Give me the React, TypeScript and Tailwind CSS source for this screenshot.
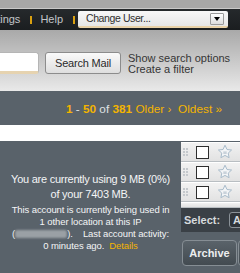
import React from 'react'

function Star() {
  return (
    <svg width="16" height="16" viewBox="0 0 16 16" className="block">
      <path
        d="M8 1.2l2 4.3 4.6.5-3.4 3.1.9 4.6L8 11.4l-4.1 2.3.9-4.6L1.4 6l4.6-.5z"
        fill="#f3f5f7"
        stroke="#a9bccb"
        strokeWidth="1"
        strokeLinejoin="round"
      />
      <rect x="6.3" y="7.4" width="3.4" height="2.6" fill="#c9d2da" />
    </svg>
  )
}

function Grip() {
  return (
    <div className="grid grid-cols-2 gap-[1px] w-[5px]">
      {[0, 1, 2, 3, 4, 5].map((i) => (
        <span key={i} className="block w-[2px] h-[2px] bg-[#c4c8cc]" />
      ))}
    </div>
  )
}

function MailRow({ cut }: { cut?: boolean }) {
  return (
    <div
      className={`flex items-center border-t border-t-white border-b border-b-[#b9bec2] bg-gradient-to-b from-[#f2f2f2] to-[#e2e2e2] pl-[2px] ${
        cut ? 'h-[6px] items-start pt-[4px] overflow-hidden' : 'h-[20px]'
      }`}
    >
      <Grip />
      <span className="ml-[8px] block w-[13px] h-[13px] border border-[#2e2e2e] bg-white shrink-0" />
      <span className="ml-[8px] shrink-0">
        <Star />
      </span>
    </div>
  )
}

export default function App() {
  return (
    <div className="w-[240px] h-[273px] overflow-hidden flex flex-col font-['Liberation_Sans',Arial,sans-serif]">
      {/* top strip */}
      <div className="h-[9px] bg-[#a7a7a7] border-b border-b-[#c9c9c9]" />

      {/* account bar */}
      <div className="h-[21px] bg-gradient-to-b from-[#25292c] to-[#1b1e20] flex items-center justify-end pr-[12px] overflow-hidden whitespace-nowrap">
        <span className="text-[11px] text-[#c3c6c9] shrink-0">Settings</span>
        <span className="ml-[10px] mr-[8px] w-[2px] h-[8px] bg-[#d9a010] shrink-0" />
        <span className="text-[11px] text-[#c3c6c9] shrink-0">Help</span>
        <span className="ml-[10px] mr-[3px] w-[2px] h-[8px] bg-[#d9a010] shrink-0" />
        <div className="w-[150px] h-[17px] shrink-0 rounded-[2px] bg-gradient-to-b from-[#f8f8f8] to-[#e6e6e6] border-b-[2px] border-b-[#e9d2a8] flex items-center justify-between pl-[8px] pr-[4px]">
          <span className="text-[10.5px] tracking-[-0.4px] text-[#2f2f2f] leading-none">Change User...</span>
          <span className="w-[14px] h-[12px] border border-[#9a9a9a] rounded-[1px] bg-gradient-to-b from-white to-[#dcdcdc] flex items-center justify-center">
            <span className="w-0 h-0 border-l-[3.5px] border-r-[3.5px] border-t-[4px] border-l-transparent border-r-transparent border-t-black" />
          </span>
        </div>
      </div>

      {/* search area */}
      <div className="h-[61px] bg-gradient-to-b from-[#a9a9a9] to-[#e9e9e9] pt-[22px] flex items-start">
        <div className="w-[43px] h-[22px] -ml-[4px] bg-white border border-[#b5b5b5] rounded-[3px] border-b-[3px] border-b-[#e6d3b0] shrink-0" />
        <div className="ml-[6px] w-[76px] h-[22px] rounded-[3px] border border-[#8c8c8c] bg-gradient-to-b from-[#fafafa] to-[#dedede] flex items-center justify-center shrink-0">
          <span className="text-[11px] tracking-[-0.2px] text-[#2a2a2a]">Search Mail</span>
        </div>
        <div className="ml-[7px] flex flex-col text-[11px] leading-[11px] text-[#353535] whitespace-nowrap pt-[1px]">
          <span>Show search options</span>
          <span>Create a filter</span>
        </div>
      </div>

      {/* pager */}
      <div className="h-[34px] bg-[#59626a] flex justify-end pr-[18px] pt-[12px] whitespace-nowrap">
        <span className="text-[11.8px] leading-[13px] text-[#f4b400]">
          <b>1</b> <span className="text-[#dfe2e4]">-</span> <b>50</b>{' '}
          <span className="text-[#dfe2e4]">of</span> <b>381</b> Older ›{'\u00a0 '}Oldest »
        </span>
      </div>

      <div className="h-[16px] bg-white" />

      {/* main */}
      <div className="flex-1 bg-[#59626a] flex">
        <div className="flex-1 pt-[31px] text-center text-[#f4f5f6]">
          <p className="text-[11px] tracking-[-0.25px] leading-[15px]">
            You are currently using 9 MB (0%)
            <br />
            of your 7403 MB.
          </p>
          <p className="mt-[2px] text-[9.5px] tracking-[-0.1px] leading-[12px]">
            This account is currently being used in
            <br />1 other location at this IP
            <br />(
            <span className="inline-block align-middle w-[52px] h-[8px] bg-[#9aa0a5] blur-[1px] rounded-[2px]" />
            ).{'\u00a0\u00a0\u00a0 '}Last account activity:
            <br />0 minutes ago.{'\u00a0 '}
            <span className="text-[#f4b400]">Details</span>
          </p>
        </div>

        <div className="w-[59px] flex flex-col pt-[1px]">
          <MailRow />
          <MailRow />
          <MailRow />
          <MailRow cut />
          <div className="h-[24px] bg-[#3a4046] flex items-center pl-[3px] overflow-hidden whitespace-nowrap">
            <span className="text-[11px] font-bold text-[#d6dadd]">Select:</span>
            <span className="ml-[9px] h-[16px] px-[3px] rounded-[3px] border border-[#8b9298] bg-[#2f3439] text-[11px] font-bold text-[#d6dadd] leading-[14px]">
              All
            </span>
          </div>
          <div className="mt-[8px] flex whitespace-nowrap">
            <span className="w-[55px] h-[26px] ml-[1px] shrink-0 rounded-[4px] border border-[#868e94] bg-gradient-to-b from-[#5a636a] to-[#434b51] flex items-center justify-center text-[11px] font-bold text-[#eceeef]">
              Archive
            </span>
            <span className="w-[20px] h-[26px] ml-[1px] shrink-0 rounded-[4px] border border-[#868e94] bg-gradient-to-b from-[#5a636a] to-[#434b51]" />
          </div>
        </div>
      </div>
    </div>
  )
}
